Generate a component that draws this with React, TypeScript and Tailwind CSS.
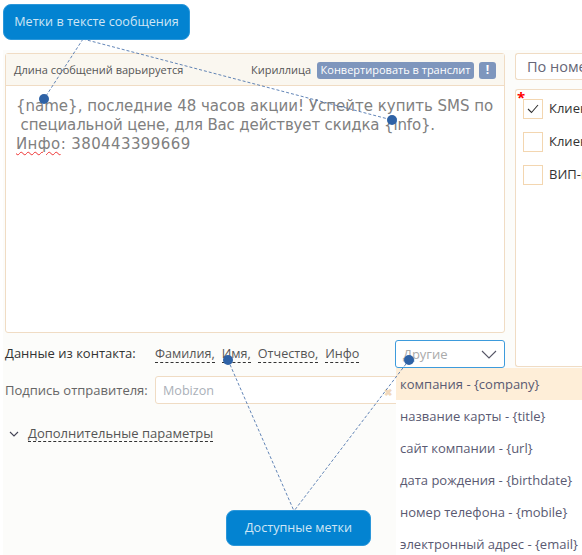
import React from 'react';

const FONT = "font-['Open_Sans',sans-serif]";

const tags = ['Фамилия,', 'Имя,', 'Отчество,', 'Инфо'];

const options = [
  'компания - {company}',
  'название карты - {title}',
  'сайт компании - {url}',
  'дата рождения - {birthdate}',
  'номер телефона - {mobile}',
  'электронный адрес - {email}',
];

const Checkbox: React.FC<{ label: string; checked?: boolean }> = ({ label, checked }) => (
  <div className="flex items-center gap-[6px] h-[20px] whitespace-nowrap">
    <div className="w-[20px] h-[20px] shrink-0 border border-[#f3d6b0] bg-white flex items-center justify-center">
      {checked && (
        <svg width="12" height="10" viewBox="0 0 12 10" fill="none">
          <path d="M1 5l3.5 3.5L11 1" stroke="#333" strokeWidth="1.1" />
        </svg>
      )}
    </div>
    <span className="text-[13px] text-[#333]">{label}</span>
  </div>
);

const Callout: React.FC<{ className: string; children: React.ReactNode }> = ({ className, children }) => (
  <div className={`absolute h-[36px] rounded-[8px] bg-[#0383d1] border border-[#2b97da] text-[#cfe6f5] text-[12.6px] flex items-center justify-center ${className}`}>
    {children}
  </div>
);

const App: React.FC = () => {
  return (
    <div className={`relative w-[582px] h-[555px] overflow-hidden bg-white ${FONT}`}>
      <div className="ml-[3px] pt-[50px] h-full">
        <div className="h-full bg-[#fcfcfa] pl-[2px] pt-[3px] flex gap-[10px]">
          {/* Left column */}
          <div className="w-[500px] shrink-0">
            <div className="h-[280px] border border-[#f0dcc4] rounded-[3px] bg-white flex flex-col">
              <div className="h-[32px] shrink-0 bg-[#faf7f0] border-b border-[#f0dcc4] pl-[8px] pr-[8px] pt-[1px] flex items-center text-[11px] text-[#555]">
                <span>Длина сообщений варьируется</span>
                <span className="ml-auto">Кириллица</span>
                <span className="ml-[6px] h-[17px] w-[157px] rounded-[3px] bg-[#7e96bd] text-white font-medium flex items-center justify-center whitespace-nowrap">
                  Конвертировать в транслит
                </span>
                <span className="ml-[5px] w-[17px] h-[17px] rounded-[3px] bg-[#7e96bd] text-white font-bold text-[12px] flex items-center justify-center">
                  !
                </span>
              </div>
              <div className="pl-[10px] pt-[11px] font-['DejaVu_Sans',sans-serif] text-[15px] leading-[19px] text-[#808080] whitespace-pre">
                <div>{'{name}, последние 48 часов акции! Успейте купить SMS по'}</div>
                <div className="tracking-[-0.15px]">{' специальной цене, для Вас действует скидка {info}.'}</div>
                <div className="tracking-[0.4px]">
                  <span className="underline decoration-wavy decoration-[#e33] decoration-1 underline-offset-2">Инфо</span>
                  {': 380443399669'}
                </div>
              </div>
            </div>

            <div className="mt-[7px] h-[28px] flex items-center">
              <span className="w-[150px] text-[13px] text-[#333]">Данные из контакта:</span>
              <div className="flex gap-[7px] text-[12.6px] text-[#555]">
                {tags.map((t) => (
                  <span key={t} className="border-b border-dashed border-[#333] leading-[16px]">{t}</span>
                ))}
              </div>
              <div className="ml-auto w-[110px] h-[28px] border border-[#3d9bdc] rounded-[3px] bg-white flex items-center justify-between pl-[7px] pr-[7px] pt-[1px] text-[13px] text-[#aaa]">
                Другие
                <svg width="16" height="9" viewBox="0 0 16 9" fill="none">
                  <path d="M1 1l7 7 7-7" stroke="#556" strokeWidth="1.1" />
                </svg>
              </div>
            </div>

            <div className="mt-[8px] h-[28px] flex items-center">
              <span className="w-[150px] text-[13px] text-[#666] pt-[1px]">Подпись отправителя:</span>
              <div className="relative flex-1 h-[28px] border border-[#f0dcc4] rounded-[3px] bg-white flex items-center pl-[7px] pt-[2px] text-[12.6px] text-[#aab0b8]">
                Mobizon
              </div>
            </div>

            <div className="mt-[21px] flex items-center gap-[9px] pl-[4px] text-[13px] text-[#555]">
              <svg width="10" height="6" viewBox="0 0 10 6" fill="none">
                <path d="M1 1l4 4 4-4" stroke="#445" strokeWidth="1.1" />
              </svg>
              <span className="border-b border-dashed border-[#333] leading-[16px]">Дополнительные параметры</span>
            </div>
          </div>

          {/* Right column */}
          <div className="flex-1 min-w-0">
            <div className="h-[27px] w-[100px] border border-[#f0dcc4] border-r-0 rounded-l-[3px] bg-white flex items-center pl-[11px] text-[14.5px] text-[#667] overflow-hidden whitespace-nowrap">
              По номеру
            </div>
            <div className="relative mt-[9px] h-[278px] w-[100px] border border-[#f0dcc4] border-r-0 rounded-l-[3px] bg-white overflow-hidden pl-[7px] pt-[9px] flex flex-col gap-[13px]">
              <span className="absolute left-[1px] top-[0px] text-[#f00] text-[15px] font-bold leading-[14px]">*</span>
              <Checkbox label="Клиенты" checked />
              <Checkbox label="Клиенты" />
              <Checkbox label="ВИП-клиенты" />
            </div>
          </div>
        </div>
      </div>

      {/* Dropdown */}
      <div className="absolute left-[396px] top-[368px] w-[186px] h-[187px] bg-white text-[13px] text-[#5a5a72] whitespace-nowrap overflow-hidden">
        {options.map((o, i) => (
          <div key={o} className={`h-[32px] pl-[4px] pt-[1px] flex items-center ${i === 0 ? 'bg-[#feeed8]' : ''}`}>{o}</div>
        ))}
      </div>
      <span className="absolute left-[384px] top-[386px] text-[#f0d8bc] text-[10px] font-bold leading-[12px]">✖</span>

      {/* Connector lines */}
      <svg className="absolute inset-0 pointer-events-none" width="582" height="555" fill="none">
        <g stroke="#3a66a5" strokeWidth="0.8" strokeDasharray="3 2">
          <path d="M83 39L44 99" />
          <path d="M83 39L392 120" />
          <path d="M228 360L294 511" />
          <path d="M409 360L294 511" />
        </g>
        <g fill="#2e62a6">
          <circle cx="44" cy="99" r="5" />
          <circle cx="392" cy="120" r="5" />
          <circle cx="228" cy="360" r="5" />
          <circle cx="409" cy="360" r="5" />
        </g>
      </svg>

      <Callout className="left-[3px] top-[4px] w-[187px]">Метки в тексте сообщения</Callout>
      <Callout className="left-[226px] top-[510px] w-[145px]">Доступные метки</Callout>
    </div>
  );
};

export default App;
